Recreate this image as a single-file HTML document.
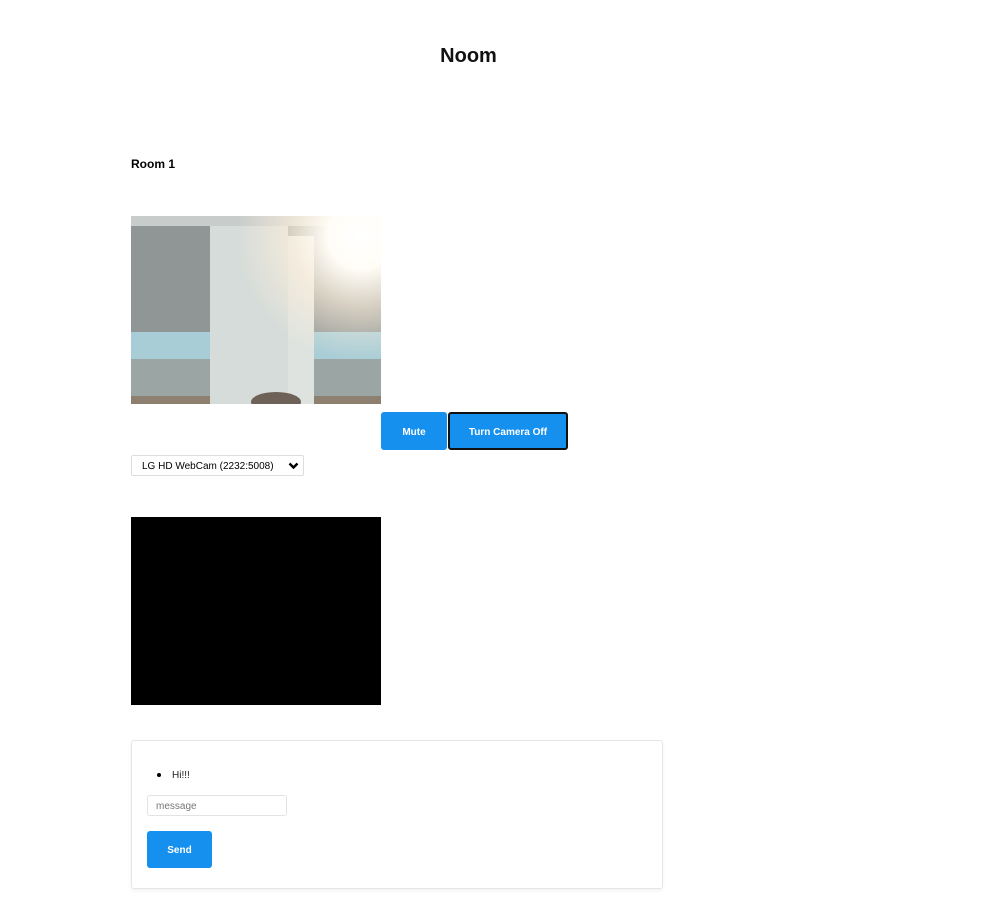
<!DOCTYPE html>
<html><head><meta charset="utf-8"><style>
body{margin:0;background:#fff;font-family:"Liberation Sans",sans-serif;width:987px;height:912px;position:relative;overflow:hidden}
.a{position:absolute}
h1{position:absolute;left:0;width:937px;top:45px;margin:0;text-align:center;font-size:20px;font-weight:bold;color:#111}
.btn{position:absolute;background:#1590ee;color:#fff;font-weight:bold;font-size:10px;display:flex;align-items:center;justify-content:center;border-radius:3px;box-sizing:border-box;padding-top:2px}
</style></head><body>
<h1>Noom</h1>
<div class="a" style="left:131px;top:157px;font-size:12px;font-weight:bold">Room 1</div>
<div class="a" style="left:131px;top:216px;width:250px;height:188px;overflow:hidden;background:#8f9695">
 <div class="a" style="left:0;top:0;width:250px;height:10px;background:#c8cccb"></div>
 <div class="a" style="left:0;top:116px;width:250px;height:27px;background:#a9cdd6"></div>
 <div class="a" style="left:0;top:143px;width:250px;height:37px;background:#9aa5a4"></div>
 <div class="a" style="left:0;top:180px;width:250px;height:8px;background:#8d8070"></div>
 <div class="a" style="left:79px;top:10px;width:78px;height:178px;background:#d6dcd9"></div>
 <div class="a" style="left:157px;top:20px;width:26px;height:168px;background:#dfe3df"></div>
 <div class="a" style="left:100px;top:-110px;width:260px;height:260px;background:radial-gradient(circle,#fff 0,#fffdf6 18%,rgba(255,240,220,.65) 38%,rgba(255,255,255,0) 68%)"></div>
 <div class="a" style="left:120px;top:176px;width:50px;height:20px;border-radius:50%;background:#6e6258"></div>
</div>
<div class="btn" style="left:381px;top:412px;width:66px;height:38px">Mute</div>
<div class="btn" style="left:448px;top:412px;width:120px;height:38px;border:2px solid #111">Turn Camera Off</div>
<div class="a" style="left:131px;top:455px;height:19px;border:1px solid #ddd;border-radius:2px;font-size:10px;line-height:21px;padding-left:10px;width:161px">LG HD WebCam (2232:5008)
<svg class="a" style="right:4px;top:6px" width="11" height="8" viewBox="0 0 11 8"><path d="M1.5 1.5L5.5 5.5L9.5 1.5" stroke="#000" stroke-width="2.4" fill="none"/></svg></div>
<div class="a" style="left:131px;top:517px;width:250px;height:188px;background:#000"></div>
<div class="a" style="left:131px;top:740px;width:530px;height:147px;border:1px solid #e6e6e6;border-radius:3px;box-shadow:0 2px 4px rgba(0,0,0,.05)"></div>
<div class="a" style="left:157px;top:773px;width:4px;height:4px;border-radius:50%;background:#000"></div>
<div class="a" style="left:172px;top:770px;font-size:10px;color:#222">Hi!!!</div>
<div class="a" style="left:147px;top:795px;border:1px solid #e3e3e3;border-radius:3px;font-size:10px;color:#777;line-height:21px;padding-left:8px;box-sizing:border-box;width:140px;height:21px">message</div>
<div class="btn" style="left:147px;top:831px;width:65px;height:37px">Send</div>
</body></html>
